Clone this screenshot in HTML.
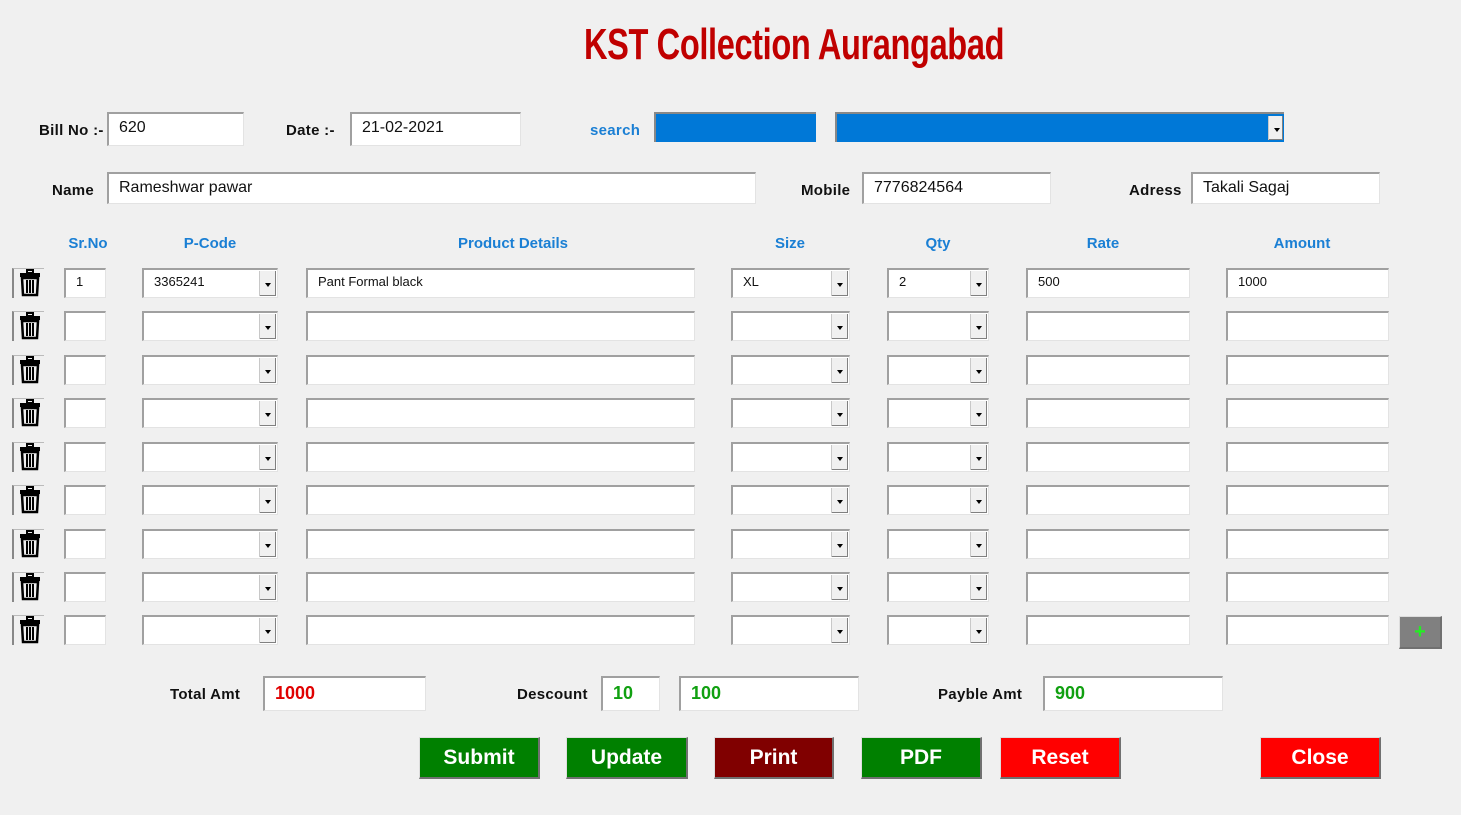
<!DOCTYPE html>
<html><head><meta charset="utf-8"><style>
body{margin:0;width:1461px;height:815px;background:#f0f0f0;position:relative;overflow:hidden;font-family:"Liberation Sans",sans-serif;}
.a{position:absolute}
.lbl{position:absolute;font-weight:bold;font-size:15px;color:#111;letter-spacing:0.3px}
.hd{position:absolute;font-weight:bold;font-size:15px;color:#1a7fd4;transform:translateX(-50%)}
.in{position:absolute;background:#fff;border-top:2px solid #a0a0a0;border-left:2px solid #a0a0a0;border-right:1px solid #e3e3e3;border-bottom:1px solid #e3e3e3;box-sizing:border-box;font-size:16px;color:#111;padding:5px 0 0 10px}
.sm{font-size:13px;padding:4px 0 0 10px}
.arr{position:absolute;right:1px;top:1px;bottom:1px;width:16px;background:#f0f0f0;border-left:1px solid #c8c8c8;box-shadow:inset -1px -1px 0 #808080}
.arr:after{content:"";position:absolute;left:5px;top:12px;border-left:3px solid transparent;border-right:3px solid transparent;border-top:4px solid #000}
.btn{position:absolute;color:#fff;font-weight:bold;font-size:21px;text-align:center;line-height:40px;box-sizing:border-box;border-right:2px solid #707070;border-bottom:2px solid #707070;border-top:1px solid #ddd;border-left:1px solid #ddd}
.tr{position:absolute;width:32px;height:30px;box-sizing:border-box;border-left:2px solid #888;border-top:1px solid #bbb}
</style></head><body>
<div class="a" style="left:584px;top:20px;font-family:'Liberation Sans Narrow','Liberation Sans',sans-serif;font-weight:bold;font-size:44px;color:#c00000;transform:scaleX(0.74);transform-origin:left;white-space:nowrap;letter-spacing:-0.5px">KST Collection Aurangabad</div>

<div class="lbl" style="left:39px;top:122px">Bill No :-</div>
<div class="in" style="left:107px;top:112px;width:137px;height:34px">620</div>
<div class="lbl" style="left:286px;top:122px">Date :-</div>
<div class="in" style="left:350px;top:112px;width:171px;height:34px">21-02-2021</div>
<div class="lbl" style="left:590px;top:122px;color:#1a7fd4">search</div>
<div class="a" style="left:654px;top:112px;width:162px;height:30px;background:#0078d7;box-sizing:border-box;border-top:2px solid #888;border-left:2px solid #888"></div>
<div class="a" style="left:835px;top:112px;width:449px;height:30px;background:#0078d7;box-sizing:border-box;border-top:2px solid #888;border-left:2px solid #888"><div class="arr" style="top:2px;bottom:2px;width:14px"></div></div>

<div class="lbl" style="left:52px;top:182px">Name</div>
<div class="in" style="left:107px;top:172px;width:649px;height:32px">Rameshwar pawar</div>
<div class="lbl" style="left:801px;top:182px">Mobile</div>
<div class="in" style="left:862px;top:172px;width:189px;height:32px">7776824564</div>
<div class="lbl" style="left:1129px;top:182px">Adress</div>
<div class="in" style="left:1191px;top:172px;width:189px;height:32px">Takali Sagaj</div>

<div class="hd" style="left:88px;top:235px">Sr.No</div>
<div class="hd" style="left:210px;top:235px">P-Code</div>
<div class="hd" style="left:513px;top:235px">Product Details</div>
<div class="hd" style="left:790px;top:235px">Size</div>
<div class="hd" style="left:938px;top:235px">Qty</div>
<div class="hd" style="left:1103px;top:235px">Rate</div>
<div class="hd" style="left:1302px;top:235px">Amount</div>

<div id="rows">
<div class="in sm" style="left:64px;top:268px;width:42px;height:30px">1</div>
<div class="in sm" style="left:142px;top:268px;width:136px;height:30px">3365241<div class="arr"></div></div>
<div class="in sm" style="left:306px;top:268px;width:389px;height:30px">Pant Formal black</div>
<div class="in sm" style="left:731px;top:268px;width:119px;height:30px">XL<div class="arr"></div></div>
<div class="in sm" style="left:887px;top:268px;width:102px;height:30px">2<div class="arr"></div></div>
<div class="in sm" style="left:1026px;top:268px;width:164px;height:30px">500</div>
<div class="in sm" style="left:1226px;top:268px;width:163px;height:30px">1000</div>
</div>

<div class="btn" style="left:1399px;top:616px;width:43px;height:33px;background:#808080;color:#22ee22;font-size:20px;line-height:30px">+</div>

<div class="lbl" style="left:170px;top:686px">Total Amt</div>
<div class="in" style="left:263px;top:676px;width:163px;height:35px;color:#e00000;font-weight:bold;font-size:18px">1000</div>
<div class="lbl" style="left:517px;top:686px">Descount</div>
<div class="in" style="left:601px;top:676px;width:59px;height:35px;color:#10a010;font-weight:bold;font-size:18px">10</div>
<div class="in" style="left:679px;top:676px;width:180px;height:35px;color:#10a010;font-weight:bold;font-size:18px">100</div>
<div class="lbl" style="left:938px;top:686px">Payble Amt</div>
<div class="in" style="left:1043px;top:676px;width:180px;height:35px;color:#10a010;font-weight:bold;font-size:18px">900</div>

<div class="btn" style="left:419px;top:737px;width:121px;height:42px;background:#008000">Submit</div>
<div class="btn" style="left:566px;top:737px;width:122px;height:42px;background:#008000">Update</div>
<div class="btn" style="left:714px;top:737px;width:120px;height:42px;background:#800000">Print</div>
<div class="btn" style="left:861px;top:737px;width:121px;height:42px;background:#008000">PDF</div>
<div class="btn" style="left:1000px;top:737px;width:121px;height:42px;background:#ff0000">Reset</div>
<div class="btn" style="left:1260px;top:737px;width:121px;height:42px;background:#ff0000">Close</div>

<script>
var ys=[268,311,355,398,442,485,529,572,615],h='';
var trash='<svg width="24" height="28" viewBox="0 0 24 28" style="position:absolute;left:4px;top:0"><rect x="9" y="1" width="6" height="3" fill="none" stroke="#000" stroke-width="2"/><rect x="2" y="4" width="20" height="4" fill="#000"/><path d="M4 9h16l-1 17H5z" fill="none" stroke="#000" stroke-width="2.5"/><path d="M9 11v13M12 11v13M15 11v13" stroke="#000" stroke-width="2"/></svg>';
ys.forEach(function(y,i){
 h+='<div class="tr" style="left:12px;top:'+y+'px">'+trash+'</div>';
 if(i>0){
 h+='<div class="in" style="left:64px;top:'+y+'px;width:42px;height:30px"></div>';
 h+='<div class="in" style="left:142px;top:'+y+'px;width:136px;height:30px"><div class="arr"></div></div>';
 h+='<div class="in" style="left:306px;top:'+y+'px;width:389px;height:30px"></div>';
 h+='<div class="in" style="left:731px;top:'+y+'px;width:119px;height:30px"><div class="arr"></div></div>';
 h+='<div class="in" style="left:887px;top:'+y+'px;width:102px;height:30px"><div class="arr"></div></div>';
 h+='<div class="in" style="left:1026px;top:'+y+'px;width:164px;height:30px"></div>';
 h+='<div class="in" style="left:1226px;top:'+y+'px;width:163px;height:30px"></div>';
 }
});
document.getElementById('rows').insertAdjacentHTML('beforeend',h);
</script>
</body></html>
